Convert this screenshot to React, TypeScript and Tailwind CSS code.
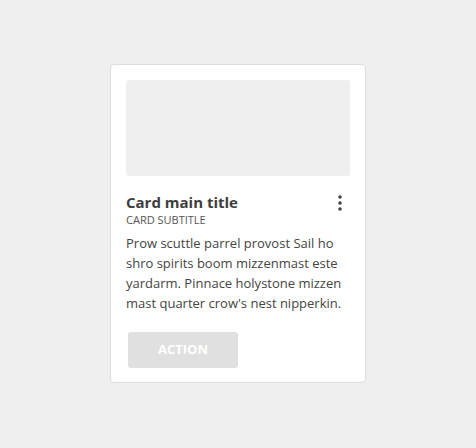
export default function App() {
  return (
    <div
      className="flex min-h-[448px] w-full items-start justify-center bg-[#efefef] pt-[64px]"
      style={{ fontFamily: '"Open Sans", sans-serif' }}
    >
      <div className="w-[256px] rounded-[4px] border border-[#dcdcdc] bg-white px-[15px] pt-[15px] pb-[14px]">
        <div className="h-[96px] w-[224px] rounded-[3px] bg-[#efefef]" />

        <div className="mt-[16px] flex items-start justify-between">
          <div>
            <h2 className="text-[15px] font-bold leading-[20px] text-[#3d3d3d]">Card main title</h2>
            <p className="text-[11px] leading-[16px] text-[#555]">CARD SUBTITLE</p>
          </div>
          <svg width="4" height="16" viewBox="0 0 4 16" className="mr-[8px] mt-[3px]" fill="#444">
            <circle cx="2" cy="2" r="1.8" />
            <circle cx="2" cy="8" r="1.8" />
            <circle cx="2" cy="14" r="1.8" />
          </svg>
        </div>

        <p className="mt-[5px] text-[13px] leading-[20px] text-[#444]">
          Prow scuttle parrel provost Sail ho shro spirits boom mizzenmast este yardarm. Pinnace
          holystone mizzen mast quarter crow's nest nipperkin.
        </p>

        <button className="ml-[2px] mt-[19px] h-[36px] w-[110px] rounded-[3px] bg-[#e0e0e0] text-[13px] font-bold text-white">
          ACTION
        </button>
      </div>
    </div>
  )
}
